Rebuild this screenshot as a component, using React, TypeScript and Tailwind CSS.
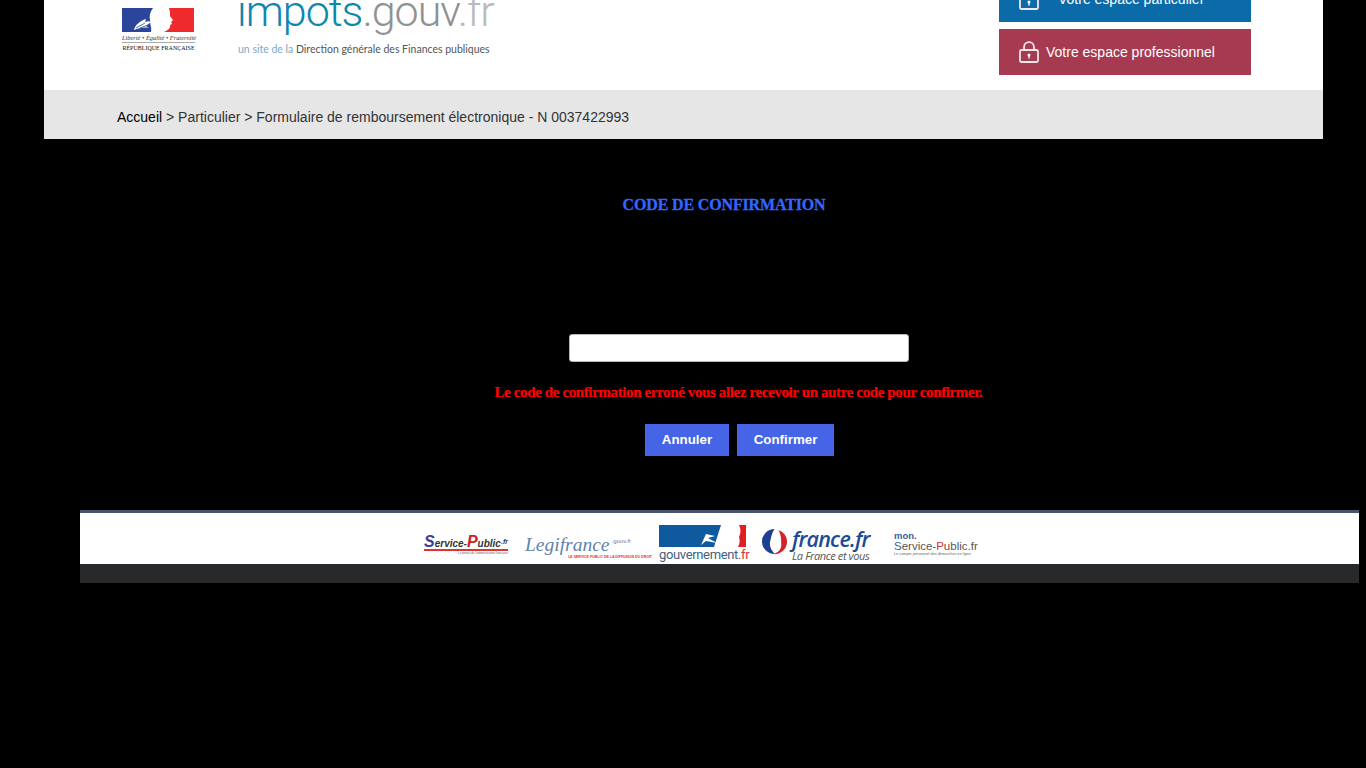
const sans = "font-['Liberation_Sans',Arial,sans-serif]";
const serif = "font-['Liberation_Serif','Times_New_Roman',serif]";
const lato = "font-['Lato',sans-serif]";
const roboto = "font-['Roboto',sans-serif]";

function Marianne() {
    return (
        <svg width="72" height="24" viewBox="0 0 72 24" className="block">
            <rect width="72" height="24" fill="#fff" />
            <path d="M0 0H31C28 4 27 8 28 12C28 17 30 20 29 24H0Z" fill="#2b459c" />
            <path d="M47 0H72V24H42C46 22 49 20 48 17L50 16L49 14L51 12L48 8C48 5 48 3 47 0Z" fill="#ef2a2d" />
            <path d="M12 22C13 17 18 13 24 11L23 14C25 13 27 13 29 14L24 18L27 20C22 19 17 20 12 22Z" fill="#fff" />
            <path d="M14 20L23 15M18 20L26 17" stroke="#2b459c" strokeWidth="0.8" />
        </svg>
    );
}

function RepubliqueLogo() {
    return (
        <div className={`mt-2 w-[73px] ${serif}`}>
            <Marianne />
            <div className="mt-[3px] text-[6.4px] leading-[6px] italic text-[#333] whitespace-nowrap text-center">Liberté • Égalité • Fraternité</div>
            <div className="border-t border-[#aaa] mt-[1px] pt-[1px] text-[6px] leading-[8px] text-[#111] whitespace-nowrap text-center">RÉPUBLIQUE FRANÇAISE</div>
        </div>
    );
}

function ImpotsLogo() {
    return (
        <div className={`ml-[42px] ${lato}`}>
            <div className={`mt-[-16px] text-[43px] leading-[54px] font-light whitespace-nowrap tracking-[-1px] text-[#8f9193] ${roboto}`}>
                <span className="text-[#0e87ae]">impots</span>.gouv<span className="text-[#b9babb]">.fr</span>
            </div>
            <div className="mt-[4px] ml-[1px] text-[10.5px] leading-[14px] whitespace-nowrap text-[#555]">
                <span className="text-[#7da8c6]">un site de la</span> Direction générale des Finances publiques
            </div>
        </div>
    );
}

function LockIcon() {
    return (
        <svg width="20" height="22" viewBox="0 0 20 22" fill="none" className="shrink-0">
            <path d="M5 9V6.5C5 3.5 7 1.2 10 1.2C13 1.2 15 3.5 15 6.5V9" stroke="#f6e6ea" strokeWidth="1.8" />
            <rect x="1" y="9" width="18" height="12" rx="1.5" stroke="#f6e6ea" strokeWidth="1.8" />
            <circle cx="10" cy="14" r="1.5" fill="#fff" />
            <rect x="9.3" y="14" width="1.4" height="3.5" fill="#fff" />
        </svg>
    );
}

function SpaceLink({ label, color, textGap }: { label: string; color: string; textGap: string }) {
    return (
        <a className={`flex items-center h-[46px] pl-[20px] text-[14px] text-white ${color} ${sans}`}>
            <LockIcon />
            <span className={textGap}>{label}</span>
        </a>
    );
}

function FooterLogos() {
    return (
        <div className="flex items-start h-[51px] bg-white pl-[344px]">
            <div className={`w-[84px] mr-[17px] mt-[21px] ${sans}`}>
                <div className="text-[10px] leading-[12px] font-bold italic text-[#333] whitespace-nowrap border-b-2 border-[#d33] h-[17px] pt-[2px]">
                    <span className="text-[16px] text-[#3a3f9c]">S</span>ervice-<span className="text-[16px] text-[#c22]">P</span>ublic<span className="text-[7px] align-top">.fr</span>
                </div>
                <div className="text-[3px] leading-[4px] text-right text-[#666] whitespace-nowrap">Le portail de l'administration française</div>
            </div>
            <div className="w-[127px] mr-[7px] mt-[18px]">
                <div className={`${serif} text-[19.5px] leading-[20px] italic text-[#5f82ad] whitespace-nowrap`}>
                    Legifrance<span className={`${sans} not-italic text-[6px] align-super text-[#778] ml-[2px]`}>.gouv.fr</span>
                </div>
                <div className={`${sans} text-[3.5px] leading-[5px] font-bold text-right text-[#d33] whitespace-nowrap`}>LE SERVICE PUBLIC DE LA DIFFUSION DU DROIT</div>
            </div>
            <div className="w-[87px] mr-[15px] mt-[12px]">
                <svg width="87" height="22" viewBox="0 0 87 22" className="block">
                    <rect width="87" height="22" fill="#fff" />
                    <rect width="48" height="22" fill="#0f5a9e" />
                    <path d="M48 0H62L55 22H38Z" fill="#0f5a9e" />
                    <path d="M80 0H87V22H79C81 18 81 15 80 12C82 8 82 4 80 0Z" fill="#e02020" />
                    <path d="M42 20L47 9L56 11L49 13L58 18L47 16Z" fill="#fff" />
                </svg>
                <div className={`${roboto} mt-[1px] text-[13px] leading-[14px] text-[#42617f] whitespace-nowrap tracking-[-0.35px]`}>gouvernement<span className="text-[#c33]">.fr</span></div>
            </div>
            <svg width="27" height="27" viewBox="0 0 28 28" className="mr-[4px] mt-[15px]">
                <path d="M14 1A13 13 0 0 0 1 14A13 13 0 0 0 14 27C10 22 8 18 10 12C11 7 12 4 14 1Z" fill="#1c3f94" />
                <path d="M18 2A13 13 0 0 1 27 14A13 13 0 0 1 12 27C18 26 21 22 21 18C21 12 21 7 18 2Z" fill="#d2232a" />
            </svg>
            <div className="w-[79px] mr-[23px] mt-[14px] font-['Open_Sans',sans-serif] italic">
                <div className="text-[21.5px] leading-[23px] font-semibold text-[#1c4a94] whitespace-nowrap tracking-[-0.8px]">france.fr</div>
                <div className="text-[11px] leading-[11px] text-[#555] whitespace-nowrap tracking-[-0.4px]">La France et vous</div>
            </div>
            <div className={`w-[84px] mt-[18px] ${sans}`}>
                <div className="text-[9.5px] leading-[9px] font-bold text-[#3c5f9c]">mon.</div>
                <div className="text-[11.5px] leading-[12px] text-[#555] whitespace-nowrap">
                    <span className="text-[#3c5f9c]">S</span>ervice-<span className="text-[#c33]">P</span>ublic.fr
                </div>
                <div className="text-[3.8px] leading-[5px] text-[#666] whitespace-nowrap">Le compte personnel des démarches en ligne</div>
            </div>
        </div>
    );
}

export default function App() {
    return (
        <div className="min-h-[768px] bg-black">
            <header className="ml-[44px] w-[1279px] h-[90px] bg-white flex items-start overflow-hidden pl-[78px]">
                <RepubliqueLogo />
                <ImpotsLogo />
                <div className="ml-auto mr-[72px] mt-[-24px] flex flex-col gap-[7px] w-[252px]">
                    <SpaceLink label="Votre espace particulier" color="bg-[#0b6ba8]" textGap="ml-[19px]" />
                    <SpaceLink label="Votre espace professionnel" color="bg-[#a63a50]" textGap="ml-[7px]" />
                </div>
            </header>
            <nav className={`ml-[44px] w-[1279px] h-[49px] bg-[#e6e6e6] pl-[73px] pt-[18px] text-[14px] leading-[18px] text-[#333] ${sans}`}>
                <span className="text-black">Accueil</span> &gt; Particulier &gt; Formulaire de remboursement électronique - N 0037422993
            </nav>
            <main className="pl-[111px] flex flex-col items-center">
                <h1 className={`mt-[57px] mr-[29px] text-[16px] leading-[18px] font-bold text-[#3366ff] tracking-[-0.15px] [-webkit-text-stroke:0.3px_#3366ff] ${serif}`}>CODE DE CONFIRMATION</h1>
                <input type="text" className="mt-[120px] w-[340px] h-[28px] bg-white border border-[#b5b5b5] rounded-[3px]" />
                <p className={`mt-[21px] text-[15px] leading-[18px] font-bold text-[#ff0000] tracking-[-0.38px] [-webkit-text-stroke:0.2px_#ff0000] ${serif}`}>
                    Le code de confirmation erroné vous allez recevoir un autre code pour confirmer.
                </p>
                <div className={`mt-[23px] ml-[2px] flex gap-[8px] text-[13.33px] font-bold text-white ${sans}`}>
                    <button className="w-[84px] h-[32px] bg-[#4664e6]">Annuler</button>
                    <button className="w-[97px] h-[32px] bg-[#4664e6]">Confirmer</button>
                </div>
            </main>
            <footer className="mt-[54px] ml-[80px] w-[1279px] border-t-[3px] border-[#47546b]">
                <FooterLogos />
                <div className="h-[19px] bg-[#28292b]" />
            </footer>
        </div>
    );
}
